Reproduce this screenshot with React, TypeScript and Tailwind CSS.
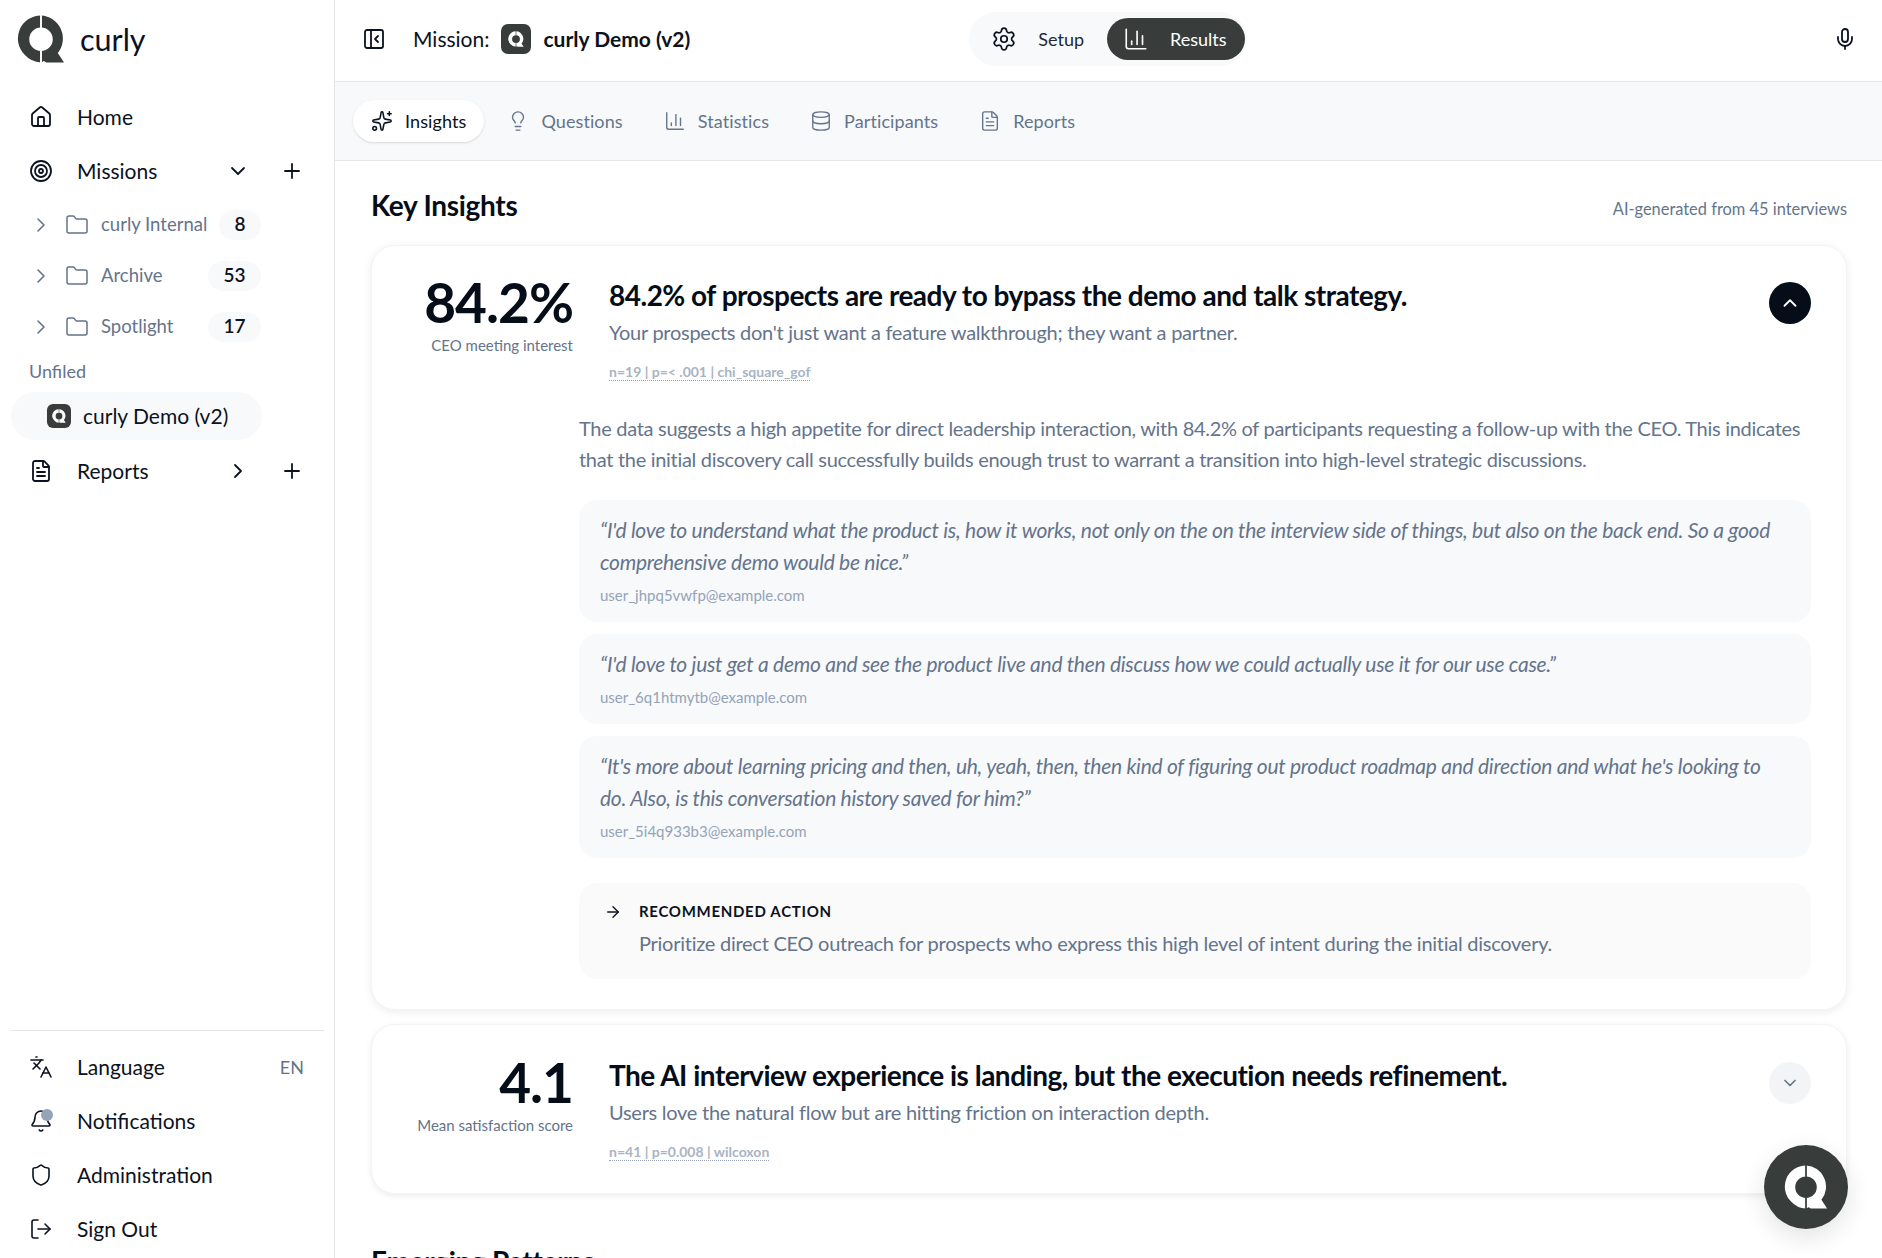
import type { ReactNode } from "react";
import {
  ArrowRight,
  Bell,
  ChartColumn,
  ChevronDown,
  ChevronRight,
  ChevronUp,
  Database,
  FileText,
  Folder,
  House,
  Languages,
  Lightbulb,
  LogOut,
  Mic,
  PanelLeftClose,
  Plus,
  Settings,
  Shield,
  Sparkles,
  Target,
} from "lucide-react";

function Logo({ className, ring, gap }: { className: string; ring: string; gap: string }) {
  return (
    <svg viewBox="0 0 100 100" className={className}>
      <path
        fill={ring}
        fillRule="evenodd"
        d="M50 1a48 48 0 0 0-34 82 48 48 0 0 0 34 16l6-3 5 3h37L85 79A48 48 0 0 0 50 1Zm0 25a24.500 24.500 0 1 1 0 49 24.500 24.500 0 0 1 0-49Z"
      />
      <rect x="48" y="0" width="4" height="27" fill={gap} />
      <rect x="48" y="74" width="4" height="26" fill={gap} />
    </svg>
  );
}

function NavRow({ icon, label, right }: { icon: ReactNode; label: string; right?: ReactNode }) {
  return (
    <div className="flex h-[54px] items-center pl-[29px] pr-[30px] text-[21px] text-[#0b1220]">
      <span className="flex w-[48px] shrink-0">{icon}</span>
      <span className="flex-1">{label}</span>
      {right}
    </div>
  );
}

function FolderRow({ label, count, badge }: { label: string; count: string; badge: string }) {
  return (
    <div className="flex h-[51px] items-center pl-[29px] text-[18.5px] text-[#64748b]">
      <ChevronRight className="h-6 w-6 shrink-0" strokeWidth={1.6} />
      <Folder className="ml-[12px] h-6 w-6 shrink-0" strokeWidth={1.5} />
      <span className="ml-[12px] flex-1">{label}</span>
      <span className={`mr-[73px] flex h-[30px] items-center justify-center rounded-full bg-[#f8f9fb] text-[19px] font-semibold text-[#0b1220] ${badge}`}>
        {count}
      </span>
    </div>
  );
}

function Tab({ icon, label, active }: { icon: ReactNode; label: string; active?: boolean }) {
  return (
    <div
      className={`flex h-[42px] items-center gap-[12px] rounded-full px-[18px] text-[18px] tracking-[0.1px] ${
        active ? "bg-white text-[#0b1220] shadow-sm" : "text-[#64748b]"
      }`}
    >
      {icon}
      {label}
    </div>
  );
}

function Quote({ lines, email }: { lines: string[]; email: string }) {
  return (
    <div className="rounded-[18px] bg-[#f8f9fb] px-[21px] pb-[15px] pt-[14px]">
      {lines.map((line) => (
        <p key={line} className="text-[21px] italic leading-[32px] tracking-[-0.28px] text-[#64748b]">
          {line}
        </p>
      ))}
      <p className="mt-[5px] text-[15px] leading-[24px] text-[#94a3b8]">{email}</p>
    </div>
  );
}

function CardHead({
  stat,
  caption,
  title,
  sub,
  meta,
  open,
}: {
  stat: string;
  caption: string;
  title: string;
  sub: string;
  meta: string;
  open?: boolean;
}) {
  return (
    <div className="flex items-start">
      <div className="flex w-[197px] shrink-0 flex-col items-end pt-[1px]">
        <span className="text-[55px] font-bold leading-[60px] tracking-[-1px] text-[#050d18]">{stat}</span>
        <span className="mt-[2px] text-[15px] leading-[22px] text-[#64748b]">{caption}</span>
      </div>
      <div className="ml-[36px] flex-1 pt-[4px]">
        <h3 className="text-[28px] font-bold leading-[40px] tracking-[-0.5px] text-[#050d18]">{title}</h3>
        <p className="mt-[1px] text-[20px] leading-[32px] tracking-[-0.27px] text-[#64748b]">{sub}</p>
        <p className="mt-[15px] inline-block border-b border-dotted border-[#94a3b8] text-[14px] font-bold leading-[17px] text-[#a9b4c4]">
          {meta}
        </p>
      </div>
      <div
        className={`mt-[11px] flex h-[42px] w-[42px] shrink-0 items-center justify-center rounded-full ${
          open ? "bg-[#050d18] text-white" : "bg-[#f3f4f6] text-[#64748b]"
        }`}
      >
        {open ? <ChevronUp className="h-[22px] w-[22px]" /> : <ChevronDown className="h-[20px] w-[20px]" />}
      </div>
    </div>
  );
}

export default function App() {
  return (
    <div className="relative flex h-[1258px] overflow-hidden bg-white [font-family:Lato,sans-serif]">
      <aside className="flex w-[335px] shrink-0 flex-col border-r border-[#e5e7eb] pb-[2px]">
        <div className="flex h-[90px] items-start pl-[17px] pt-[15px]">
          <Logo className="h-[48px] w-[48px]" ring="#383d3b" gap="#ffffff" />
          <span className="ml-[15px] mt-[2px] text-[30.500px] leading-[44px] text-[#0b1220]">curly</span>
        </div>
        <NavRow icon={<House className="h-[24px] w-[24px]" strokeWidth={1.8} />} label="Home" />
        <NavRow
          icon={<Target className="h-[24px] w-[24px]" strokeWidth={1.8} />}
          label="Missions"
          right={
            <div className="flex items-center gap-[30px]">
              <ChevronDown className="h-[24px] w-[24px]" strokeWidth={1.8} />
              <Plus className="h-[24px] w-[24px]" strokeWidth={1.8} />
            </div>
          }
        />
        <div className="mt-[1px]">
          <FolderRow label="curly Internal" count="8" badge="w-[42px]" />
          <FolderRow label="Archive" count="53" badge="w-[53px]" />
          <FolderRow label="Spotlight" count="17" badge="w-[53px]" />
        </div>
        <div className="pl-[29px] pt-[7px] text-[18px] leading-[24px] text-[#64748b]">Unfiled</div>
        <div className="ml-[11px] mt-[9px] flex h-[48px] w-[251px] items-center rounded-full bg-[#f8f9fb] pl-[36px] text-[21px] text-[#0b1220]">
          <span className="flex h-[24px] w-[24px] items-center justify-center rounded-[6px] bg-[#383d3b]">
            <Logo className="h-[14px] w-[14px]" ring="#ffffff" gap="#383d3b" />
          </span>
          <span className="ml-[12px]">curly Demo (v2)</span>
        </div>
        <div className="mt-[4px]">
          <NavRow
            icon={<FileText className="h-[24px] w-[24px]" strokeWidth={1.8} />}
            label="Reports"
            right={
              <div className="flex items-center gap-[30px]">
                <ChevronRight className="h-[24px] w-[24px]" strokeWidth={1.8} />
                <Plus className="h-[24px] w-[24px]" strokeWidth={1.8} />
              </div>
            }
          />
        </div>
        <div className="mx-[10px] mt-auto border-t border-[#e5e7eb] pt-[9px]">
          <div className="-mx-[10px]">
            <NavRow
              icon={<Languages className="h-[24px] w-[24px]" strokeWidth={1.6} />}
              label="Language"
              right={<span className="text-[18px] text-[#64748b]">EN</span>}
            />
            <NavRow
              icon={
                <span className="relative block h-[24px] w-[24px]">
                  <Bell className="h-[24px] w-[24px]" strokeWidth={1.6} />
                  <span className="absolute right-0 top-0 h-[12px] w-[12px] rounded-full bg-[#94a3b8]" />
                </span>
              }
              label="Notifications"
            />
            <NavRow icon={<Shield className="h-[24px] w-[24px]" strokeWidth={1.6} />} label="Administration" />
            <NavRow icon={<LogOut className="h-[24px] w-[24px]" strokeWidth={1.6} />} label="Sign Out" />
          </div>
        </div>
      </aside>

      <main className="min-w-0 flex-1">
        <header className="flex h-[82px] items-center border-b border-[#e5e7eb] pb-[3px] pl-[27px] pr-[25px]">
          <PanelLeftClose className="h-[24px] w-[24px] text-[#0b1220]" strokeWidth={1.8} />
          <span className="ml-[27px] text-[21px] text-[#0b1220]">Mission:</span>
          <span className="ml-[12px] flex h-[30px] w-[30px] items-center justify-center rounded-[7px] bg-[#383d3b]">
            <Logo className="h-[16px] w-[16px]" ring="#ffffff" gap="#383d3b" />
          </span>
          <span className="ml-[12px] text-[21px] font-bold text-[#0b1220]">curly Demo (v2)</span>
          <div className="ml-[279px] flex h-[54px] items-center rounded-full bg-[#f8f9fb] pl-[22px] pr-[2px] text-[18px]">
            <Settings className="h-[26px] w-[26px] text-[#0b1220]" strokeWidth={1.6} />
            <span className="ml-[21px] text-[#1f2937]">Setup</span>
            <div className="ml-[23px] flex h-[42px] items-center rounded-full bg-[#383d3b] pl-[16px] pr-[18px] text-white">
              <ChartColumn className="h-[26px] w-[26px]" strokeWidth={1.5} />
              <span className="ml-[21px]">Results</span>
            </div>
          </div>
          <Mic className="ml-auto h-[24px] w-[24px] text-[#0b1220]" strokeWidth={1.8} />
        </header>

        <nav className="flex h-[79px] items-center gap-[5px] border-b border-[#e5e7eb] bg-[#f8f9fb] pl-[18px]">
          <Tab active icon={<Sparkles className="h-[22px] w-[22px]" strokeWidth={1.7} />} label="Insights" />
          <Tab icon={<Lightbulb className="h-[22px] w-[22px]" strokeWidth={1.5} />} label="Questions" />
          <Tab icon={<ChartColumn className="h-[22px] w-[22px]" strokeWidth={1.5} />} label="Statistics" />
          <Tab icon={<Database className="h-[22px] w-[22px]" strokeWidth={1.5} />} label="Participants" />
          <Tab icon={<FileText className="h-[22px] w-[22px]" strokeWidth={1.5} />} label="Reports" />
        </nav>

        <div className="pl-[36px] pr-[35px]">
          <div className="flex h-[84px] items-center justify-between">
            <h2 className="mt-[4px] text-[28px] font-bold tracking-[-0.3px] text-[#050d18]">Key Insights</h2>
            <span className="mt-[12px] text-[16.400px] text-[#64748b]">AI-generated from 45 interviews</span>
          </div>

          <section className="rounded-[24px] border border-[#f3f4f6] bg-white pb-[30px] pl-[4px] pr-[35px] pt-[25px] shadow-[0_2px_8px_rgba(15,23,42,0.08)]">
            <CardHead
              open
              stat="84.2%"
              caption="CEO meeting interest"
              title="84.2% of prospects are ready to bypass the demo and talk strategy."
              sub="Your prospects don't just want a feature walkthrough; they want a partner."
              meta="n=19 | p=< .001 | chi_square_gof"
            />
            <div className="ml-[203px]">
              <p className="mt-[30px] text-[20px] leading-[31px] tracking-[-0.3px] text-[#64748b]">
                The data suggests a high appetite for direct leadership interaction, with 84.2% of participants requesting a
                follow-up with the CEO. This indicates that the initial discovery call successfully builds enough trust to
                warrant a transition into high-level strategic discussions.
              </p>
              <div className="mt-[25px] flex flex-col gap-[12px]">
                <Quote
                  lines={[
                    "“I'd love to understand what the product is, how it works, not only on the on the interview side of things, but also on the back end. So a good",
                    "comprehensive demo would be nice.”",
                  ]}
                  email="user_jhpq5vwfp@example.com"
                />
                <Quote
                  lines={["“I'd love to just get a demo and see the product live and then discuss how we could actually use it for our use case.”"]}
                  email="user_6q1htmytb@example.com"
                />
                <Quote
                  lines={[
                    "“It's more about learning pricing and then, uh, yeah, then, then kind of figuring out product roadmap and direction and what he's looking to",
                    "do. Also, is this conversation history saved for him?”",
                  ]}
                  email="user_5i4q933b3@example.com"
                />
              </div>
              <div className="mt-[25px] flex h-[96px] items-start rounded-[18px] bg-[#fafafa] pl-[25px] pt-[17px]">
                <ArrowRight className="mt-[3px] h-[18px] w-[18px] shrink-0 text-[#0b1220]" strokeWidth={1.8} />
                <div className="ml-[17px]">
                  <p className="text-[15px] font-bold leading-[22px] tracking-[0.7px] text-[#0b1220]">RECOMMENDED ACTION</p>
                  <p className="mt-[6px] text-[20px] leading-[30px] tracking-[-0.26px] text-[#64748b]">
                    Prioritize direct CEO outreach for prospects who express this high level of intent during the initial discovery.
                  </p>
                </div>
              </div>
            </div>
          </section>

          <section className="mt-[14px] rounded-[24px] border border-[#f3f4f6] bg-white pb-[30px] pl-[4px] pr-[35px] pt-[26px] shadow-[0_2px_6px_rgba(15,23,42,0.08)]">
            <CardHead
              stat="4.1"
              caption="Mean satisfaction score"
              title="The AI interview experience is landing, but the execution needs refinement."
              sub="Users love the natural flow but are hitting friction on interaction depth."
              meta="n=41 | p=0.008 | wilcoxon"
            />
          </section>

          <h2 className="mt-[46px] text-[28px] font-bold tracking-[-0.3px] text-[#050d18]">Emerging Patterns</h2>
        </div>
      </main>

      <div className="absolute bottom-[29px] right-[34px] flex h-[84px] w-[84px] items-center justify-center rounded-full bg-[#383d3b] shadow-[0_8px_24px_rgba(15,23,42,0.12)]">
        <Logo className="h-[44px] w-[44px]" ring="#ffffff" gap="#383d3b" />
      </div>
    </div>
  );
}
